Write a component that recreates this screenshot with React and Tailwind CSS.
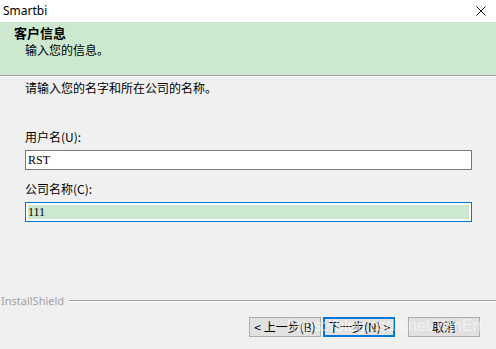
export default function App() {
  const cjk = { fontFamily: '"Noto Sans CJK SC", "Liberation Sans", sans-serif' };
  return (
    <div className="relative w-[496px] h-[349px] bg-[#f0f0f0] flex flex-col overflow-hidden" style={cjk}>
      {/* title bar */}
      <div className="h-[22px] bg-white flex items-center justify-between pl-[3px] pr-[10px]">
        <span className="text-[12px] leading-none text-black" style={{ fontFamily: '"Noto Sans", "Open Sans", sans-serif' }}>Smartbi</span>
        <svg width="10" height="10" viewBox="0 0 10 10" className="mb-[1px]">
          <path d="M0.5 0.5 L9.5 9.5 M9.5 0.5 L0.5 9.5" stroke="#111" strokeWidth="1" fill="none" />
        </svg>
      </div>
      {/* header */}
      <div className="h-[53px] bg-[#cce8cf] pl-[14px] pt-[3px]">
        <div className="text-[13px] leading-[16px] font-bold text-black">客户信息</div>
        <div className="text-[12px] leading-[16px] text-black pl-[11px] mt-[1px]">输入您的信息。</div>
      </div>
      <div className="h-px bg-[#a0a0a0]" />
      <div className="h-px bg-white" />
      {/* body */}
      <div className="flex-1 flex flex-col px-[25px] pr-[24px]">
        <div className="mt-[3px] text-[12px] leading-[16px] text-black">请输入您的名字和所在公司的名称。</div>
        <div className="mt-[33px] text-[12px] leading-[16px] text-black">用户名(U):</div>
        <div className="mt-[5px] h-[20px] bg-white border border-[#7a7a7a] flex items-center pl-[2px]">
          <span className="text-[12px] leading-none text-black" style={{ fontFamily: '"Liberation Serif", serif' }}>RST</span>
        </div>
        <div className="mt-[11px] text-[12px] leading-[16px] text-black">公司名称(C):</div>
        <div className="mt-[5px] h-[20px] bg-white border border-[#0078d7] p-[2px]">
          <div className="h-full bg-[#cce8cf] flex items-center">
            <span className="text-[12px] leading-none text-black" style={{ fontFamily: '"Liberation Serif", serif' }}>111</span>
          </div>
        </div>
      </div>
      {/* footer */}
      <div className="h-[72px] flex flex-col">
        <div className="mt-[17px] flex items-center">
          <span className="pl-[1px] text-[11px] leading-[14px] text-[#a0a0a0]" style={{ fontFamily: '"Noto Sans", "Liberation Sans", sans-serif' }}>InstallShield</span>
          <div className="flex-1 ml-[5px] flex flex-col">
            <div className="h-px bg-[#a0a0a0]" />
            <div className="h-px bg-white" />
          </div>
        </div>
        <div className="mt-[9px] flex pl-[249px] gap-[2px]">
          <button className="w-[72px] h-[20px] bg-[#e1e1e1] border border-[#adadad] text-[12px] leading-none text-black flex items-center justify-center">&lt; 上一步(B)</button>
          <button className="w-[72px] h-[20px] bg-[#e1e1e1] border-2 border-[#0078d7] text-[12px] leading-none text-black flex items-center justify-center">下一步(N) &gt;</button>
          <button className="ml-[11px] w-[72px] h-[20px] bg-[#e1e1e1] border border-[#adadad] text-[12px] leading-none text-black flex items-center justify-center">取消</button>
        </div>
      </div>
      {/* watermark */}
      <div className="absolute left-[287px] top-[316px] text-[16px] leading-[20px] text-white/60 pointer-events-none" style={{ fontFamily: '"Liberation Sans", sans-serif' }}>https://blog.csdn.net/YanErr</div>
    </div>
  );
}
